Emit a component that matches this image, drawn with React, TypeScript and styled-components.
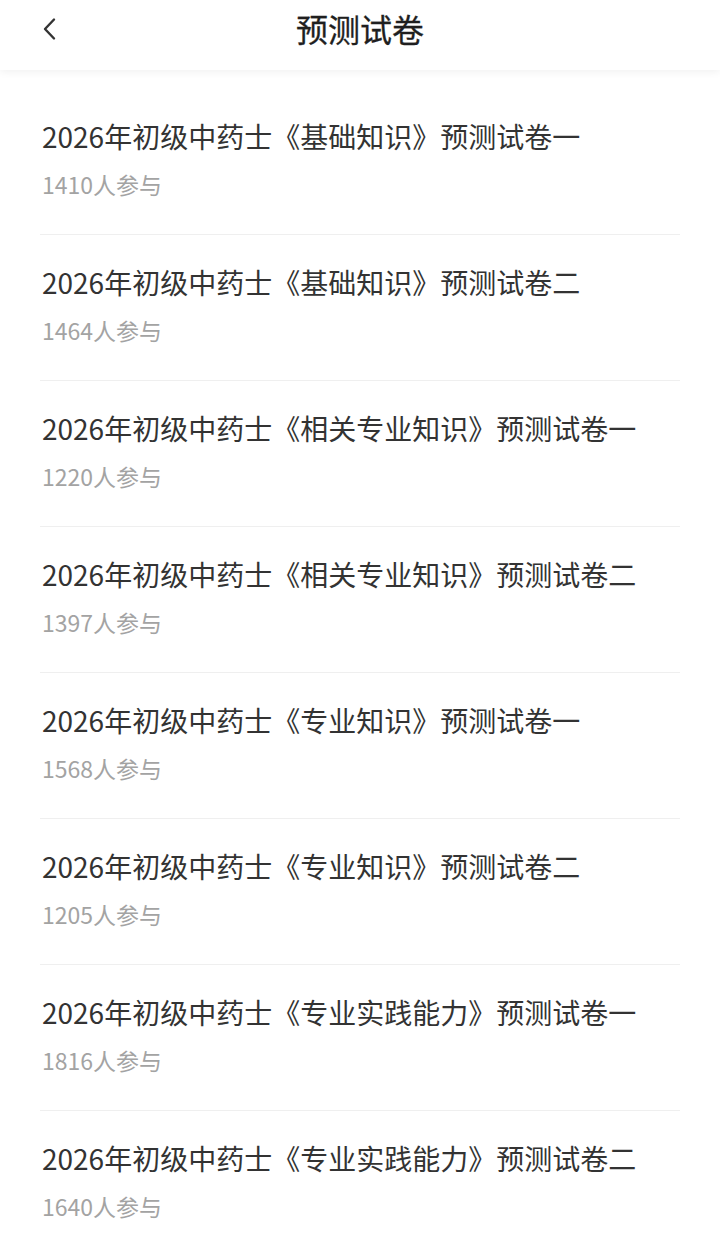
import React from "react";
import styled, { createGlobalStyle } from "styled-components";

const GlobalStyle = createGlobalStyle`
  html, body {
    margin: 0;
    padding: 0;
    background: #fff;
  }
  body {
    font-family: "Noto Sans CJK SC", "Noto Sans", sans-serif;
    -webkit-font-smoothing: antialiased;
  }
`;

interface Paper {
  title: string;
  count: number;
}

const papers: Paper[] = [
  { title: "2026年初级中药士《基础知识》预测试卷一", count: 1410 },
  { title: "2026年初级中药士《基础知识》预测试卷二", count: 1464 },
  { title: "2026年初级中药士《相关专业知识》预测试卷一", count: 1220 },
  { title: "2026年初级中药士《相关专业知识》预测试卷二", count: 1397 },
  { title: "2026年初级中药士《专业知识》预测试卷一", count: 1568 },
  { title: "2026年初级中药士《专业知识》预测试卷二", count: 1205 },
  { title: "2026年初级中药士《专业实践能力》预测试卷一", count: 1816 },
  { title: "2026年初级中药士《专业实践能力》预测试卷二", count: 1640 },
];

const Page = styled.div`
  width: 720px;
  min-height: 1244px;
  background: #fff;
  overflow: hidden;
`;

const Header = styled.header`
  position: relative;
  height: 70px;
  display: flex;
  align-items: center;
  justify-content: center;
  background: #fff;
  box-shadow: 0 2px 8px rgba(0, 0, 0, 0.06);
`;

const BackButton = styled.button`
  position: absolute;
  left: 38px;
  top: 16px;
  width: 22px;
  height: 26px;
  padding: 0;
  border: 0;
  background: none;
  display: flex;
  align-items: center;
  justify-content: center;
`;

const Title = styled.h1`
  margin: 0 0 14px;
  font-size: 32px;
  font-weight: 400;
  color: #1f1f1f;
  line-height: 42px;
  -webkit-text-stroke: 0.3px #1f1f1f;
`;

const List = styled.ul`
  list-style: none;
  margin: 0;
  padding: 19px 40px 0;
`;

const Item = styled.li`
  padding: 27px 2px 35px;
  border-bottom: 1px solid #efefef;
  display: flex;
  flex-direction: column;
  gap: 13px;
`;

const ItemTitle = styled.div`
  font-size: 28px;
  line-height: 40px;
  color: #333;
  white-space: nowrap;
`;

const ItemMeta = styled.div`
  font-size: 23px;
  line-height: 30px;
  color: #a3a3a3;
`;

export default function App() {
  return (
    <Page>
      <GlobalStyle />
      <Header>
        <BackButton aria-label="返回">
          <svg width="14" height="24" viewBox="0 0 14 24" fill="none">
            <path
              d="M12 2.5 L3 12 L12 21.5"
              stroke="#333"
              strokeWidth="2.4"
              strokeLinecap="round"
              strokeLinejoin="round"
            />
          </svg>
        </BackButton>
        <Title>预测试卷</Title>
      </Header>
      <List>
        {papers.map((p) => (
          <Item key={p.title}>
            <ItemTitle>{p.title}</ItemTitle>
            <ItemMeta>{p.count}人参与</ItemMeta>
          </Item>
        ))}
      </List>
    </Page>
  );
}
